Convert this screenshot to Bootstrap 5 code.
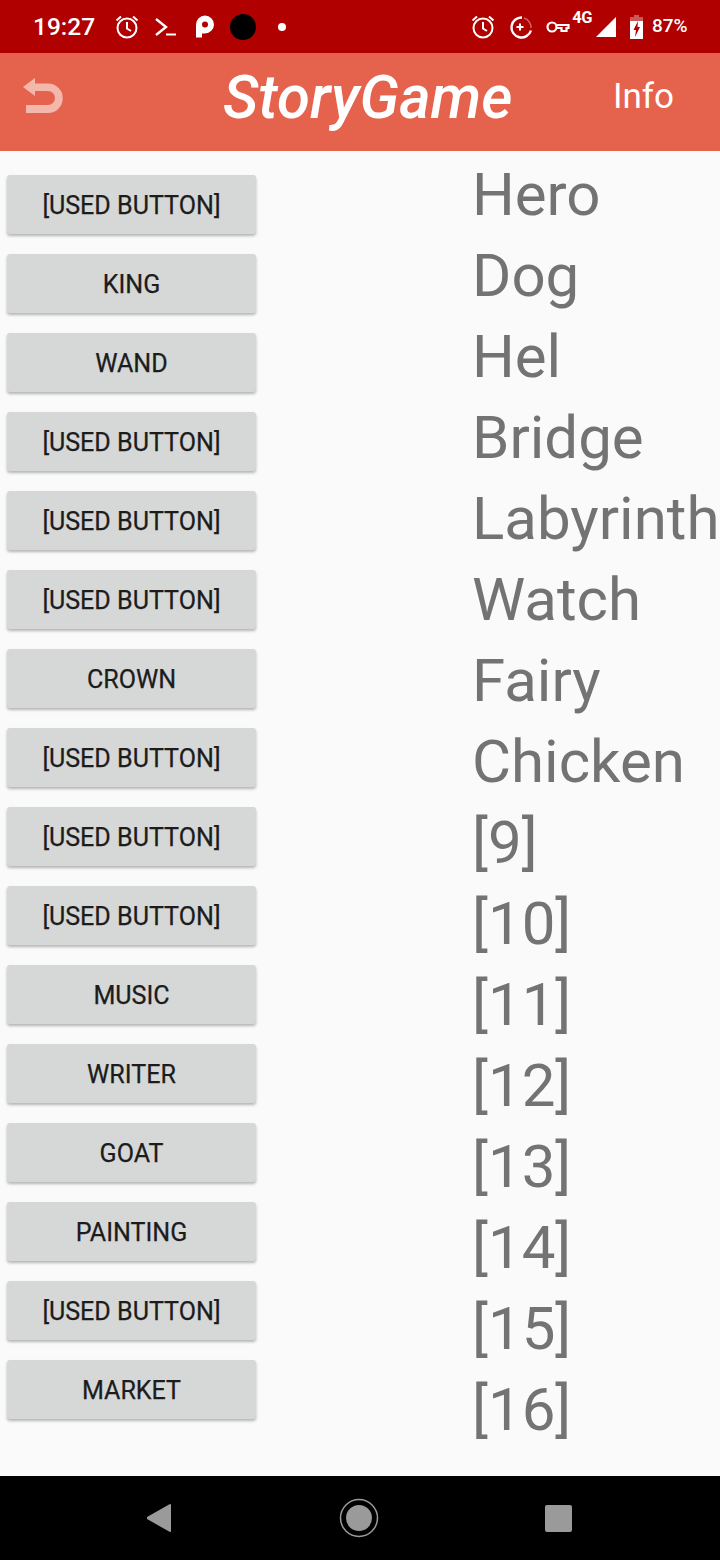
<!DOCTYPE html>
<html lang="en">
<head>
  <meta charset="UTF-8" />
  <meta name="viewport" content="width=device-width, initial-scale=1" />
  <title>StoryGame</title>
  <link href="https://cdn.jsdelivr.net/npm/bootstrap@5.3.0/dist/css/bootstrap.min.css" rel="stylesheet" />
  <style>
    body { width: 720px; height: 1560px; overflow: hidden; font-family: Roboto, "Liberation Sans", sans-serif; background: #fafafa; }
    .status-strip { height: 53px; background: #b00000; color: #fff; padding-left: 33px; }
    .status-time { font-size: 24.5px; font-weight: 500; width: 81px; line-height: 52px; }
    .status-right { margin-left: auto; }
    .batt-text { font-size: 19px; font-weight: 500; width: 36px; margin-left: 9px; margin-right: 32px; }
    .net-text { font-size: 16.5px; font-weight: 700; line-height: 1; margin: -17px 0 0 2px; letter-spacing: -.5px; }
    .gap-3px { margin-left: 3px; }
    .gap-11px { margin-left: 11px; }
    .gap-13px { margin-left: 13px; }
    .gap-14px { margin-left: 14px; }
    .gap-17px { margin-left: 17px; }
    .gap-21px { margin-left: 21px; }
    .app-head { height: 98px; background: #e5634d; color: #fff; }
    .back-slot { width: 223px; padding-left: 22px; }
    .back-slot svg { margin-bottom: 13px; }
    .app-title { font-size: 60px; font-weight: 500; font-style: italic; width: 390px; line-height: 1; margin-top: -8px; }
    .app-info { font-size: 35px; line-height: 1; margin-top: -12px; }
    .game-body { height: 1325px; background: #fafafa; }
    .word-btns { width: 473px; padding: 24px 0 0 7px; gap: 20px; }
    .word-btn { width: 249px; height: 59px; padding: 3px 0 0; border: 0; border-radius: 3px; background: #d6d7d7; color: #1c1c1c; font-size: 25.1px; font-weight: 400; -webkit-text-stroke: .25px #1c1c1c; box-shadow: 0 2px 3px rgba(0,0,0,.28); }
    .word-labels { font-size: 60px; line-height: 81px; color: #737373; white-space: nowrap; padding-top: 3px; margin-left: -1px; }
    .nav-strip { height: 84px; background: #000; padding-right: 2px; }
    .nav-cell { width: 199px; }
  </style>
</head>
<body>
  <div class="status-strip d-flex align-items-center">
    <span class="status-time">19:27</span>
    <div class="d-flex align-items-center">
      <svg width="26" height="26" viewBox="0 0 26 26" fill="none" stroke="#fff" stroke-width="2"><circle cx="13" cy="14" r="9.500"/><path d="M13 8v6.500l4 2.500M2.500 6.500L7 2.500M23.500 6.500L19 2.500"/></svg>
      <svg class="gap-13px" width="26" height="26" viewBox="0 0 26 26" fill="none" stroke="#fff" stroke-width="2.400"><path d="M3 5l10 8-10 8"/><path d="M13 20.500h10" stroke-width="2"/></svg>
      <svg class="gap-17px" width="20" height="26" viewBox="0 0 20 26"><path d="M0 23.500V10.500a9 9 0 1 1 9 9H6v4z" fill="#fff"/><circle cx="9" cy="10.500" r="3" fill="#b00000"/></svg>
      <svg class="gap-14px" width="26" height="26" viewBox="0 0 26 26"><circle cx="13" cy="13" r="13" fill="#000"/></svg>
      <svg class="gap-21px" width="10" height="10" viewBox="0 0 10 10"><circle cx="5" cy="5" r="4" fill="#fff"/></svg>
    </div>
    <div class="status-right d-flex align-items-center">
      <svg width="26" height="26" viewBox="0 0 26 26" fill="none" stroke="#fff" stroke-width="2"><circle cx="13" cy="14" r="9.500"/><path d="M13 8v6.500l4 2.500M2.500 6.500L7 2.500M23.500 6.500L19 2.500"/></svg>
      <svg class="gap-11px" width="26" height="26" viewBox="0 0 26 26" fill="none" stroke="#fff"><path d="M15 3.500a10 10 0 1 0 9 13" stroke-width="2.400"/><path d="M17 4a10 10 0 0 1 7 10" stroke-width="1.500" stroke-opacity=".4"/><path d="M13 9.500v7M9.500 13h7" stroke-width="2"/></svg>
      <svg class="gap-13px" width="24" height="14" viewBox="0 0 24 14" fill="none" stroke="#fff" stroke-width="2.200"><circle cx="6" cy="7" r="4.500"/><path d="M11 5h11.500v3h-2v3h-5V8H11"/></svg>
      <span class="net-text">4G</span>
      <svg class="gap-3px" width="22" height="22" viewBox="0 0 22 22"><path d="M21 1v20H1z" fill="#fff"/></svg>
      <svg class="gap-13px" width="13" height="24" viewBox="0 0 13 24"><path d="M4 0h5v2h4v4H0V2h4z" fill="#fff" fill-opacity=".35"/><path d="M0 6h13v18H0z" fill="#fff"/><path d="M8 6L3.500 15H6l-1 7 5-10H7.500z" fill="#b00000"/></svg>
      <span class="batt-text">87%</span>
    </div>
  </div>

  <div class="app-head d-flex align-items-center">
    <div class="back-slot">
      <svg class="d-block" width="42" height="37" viewBox="0 0 42 37"><path d="M13 1L1 10l12 9v-5h13a7 7 0 0 1 0 14H4v8h22a14.750 14.750 0 0 0 0-29.500H13z" fill="#f4b7ac"/></svg>
    </div>
    <div class="app-title">StoryGame</div>
    <div class="app-info">Info</div>
  </div>

  <div class="game-body d-flex">
    <div class="word-btns d-flex flex-column">
      <button class="word-btn">[USED BUTTON]</button>
      <button class="word-btn">KING</button>
      <button class="word-btn">WAND</button>
      <button class="word-btn">[USED BUTTON]</button>
      <button class="word-btn">[USED BUTTON]</button>
      <button class="word-btn">[USED BUTTON]</button>
      <button class="word-btn">CROWN</button>
      <button class="word-btn">[USED BUTTON]</button>
      <button class="word-btn">[USED BUTTON]</button>
      <button class="word-btn">[USED BUTTON]</button>
      <button class="word-btn">MUSIC</button>
      <button class="word-btn">WRITER</button>
      <button class="word-btn">GOAT</button>
      <button class="word-btn">PAINTING</button>
      <button class="word-btn">[USED BUTTON]</button>
      <button class="word-btn">MARKET</button>
    </div>
    <div class="word-labels">
      <div>Hero</div><div>Dog</div><div>Hel</div><div>Bridge</div>
      <div>Labyrinth</div><div>Watch</div><div>Fairy</div><div>Chicken</div>
      <div>[9]</div><div>[10]</div><div>[11]</div><div>[12]</div>
      <div>[13]</div><div>[14]</div><div>[15]</div><div>[16]</div>
    </div>
  </div>

  <div class="nav-strip d-flex align-items-center justify-content-center">
    <div class="nav-cell text-center"><svg width="26" height="30" viewBox="1 0 26 30"><path d="M25 2v26a1 1 0 0 1-1.500 .8L1 16a1 1 0 0 1 0-2L23.500 1.200A1 1 0 0 1 25 2z" fill="#9a9a9a"/></svg></div>
    <div class="nav-cell text-center"><svg width="40" height="40" viewBox="0 0 40 40"><circle cx="20" cy="20" r="18.500" fill="none" stroke="#9a9a9a" stroke-width="1.500"/><circle cx="20" cy="20" r="13" fill="#9a9a9a"/></svg></div>
    <div class="nav-cell text-center"><svg width="27" height="27" viewBox="0 0 27 27"><rect width="27" height="27" rx="2" fill="#9a9a9a"/></svg></div>
  </div>
  <script src="https://cdn.jsdelivr.net/npm/bootstrap@5.3.0/dist/js/bootstrap.bundle.min.js"></script>
</body>
</html>
